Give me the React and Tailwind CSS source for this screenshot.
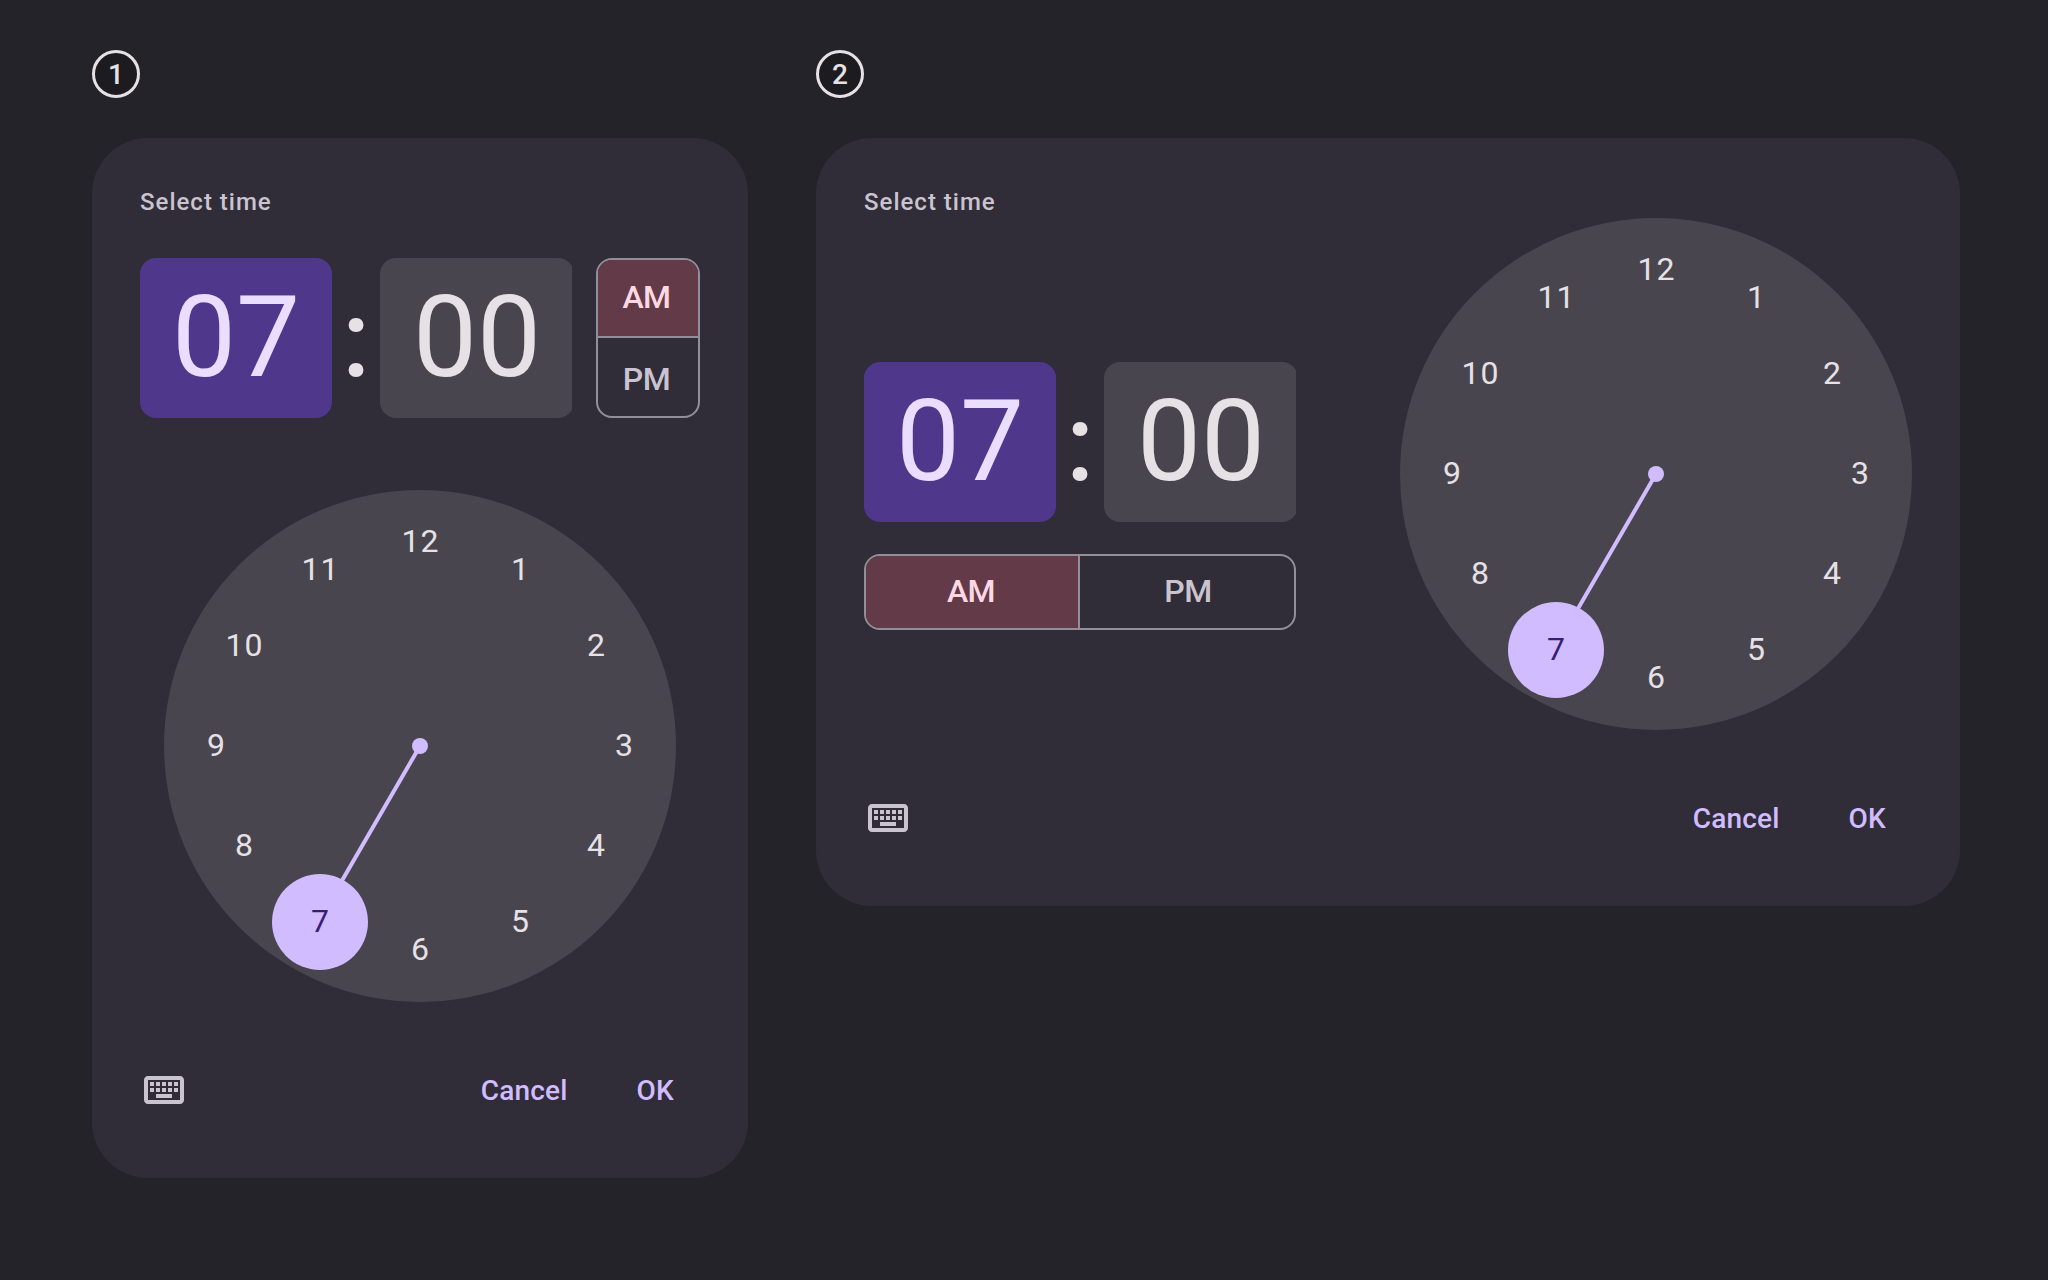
import React from "react";

const HOURS = [
  { n: 12, x: 0, y: -204 },
  { n: 1, x: 100, y: -176 },
  { n: 2, x: 176, y: -100 },
  { n: 3, x: 204, y: 0 },
  { n: 4, x: 176, y: 100 },
  { n: 5, x: 100, y: 176 },
  { n: 6, x: 0, y: 204 },
  { n: 7, x: -100, y: 176 },
  { n: 8, x: -176, y: 100 },
  { n: 9, x: -204, y: 0 },
  { n: 10, x: -176, y: -100 },
  { n: 11, x: -100, y: -176 },
];

function Badge({ children }) {
  return (
    <div className="flex size-12 items-center justify-center rounded-full border-3 border-[#e6e1e5] bg-[#1c1b1f] pt-0.5 text-[28px] leading-none font-medium text-[#e6e1e5]">
      {children}
    </div>
  );
}

function ClockDial({ selected }) {
  const hand = HOURS.find((h) => h.n === selected);
  return (
    <div className="relative size-[512px] shrink-0 rounded-full bg-[#49454f]">
      <svg className="absolute inset-0 size-full" viewBox="-256 -256 512 512" fill="#d0bcff">
        <line x1="0" y1="0" x2={hand.x * 1.02} y2={hand.y} stroke="#d0bcff" strokeWidth="4" />
        <circle r="8" />
        <circle cx={hand.x} cy={hand.y} r="48" />
      </svg>
      {HOURS.map(({ n, x, y }) => (
        <span
          key={n}
          className={`absolute flex h-12 w-24 -translate-x-1/2 -translate-y-1/2 items-center justify-center text-[32px] leading-[48px] tracking-[1px] ${
            n === selected ? "text-[#381e72]" : "text-[#e6e1e5]"
          }`}
          style={{ left: 256.5 + x, top: 255 + y }}
        >
          {n}
        </span>
      ))}
    </div>
  );
}

function TimeFields() {
  return (
    <div className="flex h-40 w-[432px] overflow-hidden text-[114px] leading-[128px]">
      <div className="flex w-48 shrink-0 justify-center rounded-2xl bg-[#4f378b] pt-[15px] text-[#eaddff]">07</div>
      <div className="flex w-12 shrink-0 justify-center pt-[18px] text-[107px] font-medium text-[#e6e1e5]">:</div>
      <div className="flex w-[194px] shrink-0 justify-center rounded-2xl bg-[#49454f] pt-[15px] text-[#e6e1e5]">00</div>
    </div>
  );
}

function KeyboardIcon() {
  return (
    <svg className="size-12" viewBox="0 0 24 24" fill="#cac4d0">
      <path d="M20 7v10H4V7h16m0-2H4c-1.1 0-2 .9-2 2v10c0 1.1.9 2 2 2h16c1.1 0 2-.9 2-2V7c0-1.1-.9-2-2-2zM11 8h2v2h-2zM11 11h2v2h-2zM8 8h2v2H8zM8 11h2v2H8zM5 11h2v2H5zM5 8h2v2H5zM8 14h8v2H8zM14 11h2v2h-2zM14 8h2v2h-2zM17 11h2v2h-2zM17 8h2v2h-2z" />
    </svg>
  );
}

function Actions() {
  return (
    <div className="flex h-20 items-center justify-between">
      <KeyboardIcon />
      <div className="flex gap-[21px] pt-0.5 text-[28px] leading-10 font-medium tracking-[0.2px] text-[#d0bcff]">
        <button className="px-6">Cancel</button>
        <button className="pr-[26px] pl-6">OK</button>
      </div>
    </div>
  );
}

function Label() {
  return <div className="text-2xl leading-8 font-medium tracking-[1px] text-[#cac4d0]">Select time</div>;
}

export default function App() {
  return (
    <div className="flex h-[1280px] w-[2048px] items-start gap-[68px] overflow-hidden bg-[#25232a] pt-[50px] pl-[92px] font-['Roboto',sans-serif]">
      <section className="flex flex-col gap-10">
        <Badge>1</Badge>
        <div className="flex h-[1040px] w-[656px] flex-col rounded-[56px] bg-[#302d38] px-12 pt-12">
          <Label />
          <div className="mt-10 flex justify-between">
            <TimeFields />
            <div className="flex h-40 w-[104px] flex-col overflow-hidden rounded-2xl border-2 border-[#938f99] text-[32px] font-medium tracking-[-0.5px]">
              <div className="flex h-[78px] items-center justify-center border-b-2 border-[#938f99] bg-[#633b48] pr-[3px] pb-0.5 text-[#ffd8e4]">
                AM
              </div>
              <div className="flex flex-1 items-center justify-center pt-1 pr-[3px] text-[#cac4d0]">PM</div>
            </div>
          </div>
          <div className="mt-[72px] flex justify-center">
            <ClockDial selected={7} />
          </div>
          <div className="mt-12">
            <Actions />
          </div>
        </div>
      </section>

      <section className="flex flex-col gap-10">
        <Badge>2</Badge>
        <div className="flex h-[768px] w-[1144px] flex-col rounded-[56px] bg-[#302d38] px-12 pt-12">
          <div className="flex h-[592px] justify-between">
            <div className="flex w-[432px] flex-col">
              <Label />
              <div className="mt-36">
                <TimeFields />
              </div>
              <div className="mt-8 flex h-[76px] overflow-hidden rounded-2xl border-2 border-[#938f99] text-[32px] font-medium tracking-[-0.5px]">
                <div className="flex w-[214px] items-center justify-center border-r-2 border-[#938f99] bg-[#633b48] pr-0.5 pb-0.5 text-[#ffd8e4]">
                  AM
                </div>
                <div className="flex flex-1 items-center justify-center pb-0.5 pl-0.5 text-[#cac4d0]">PM</div>
              </div>
            </div>
            <div className="pt-8">
              <ClockDial selected={7} />
            </div>
          </div>
          <Actions />
        </div>
      </section>
    </div>
  );
}
